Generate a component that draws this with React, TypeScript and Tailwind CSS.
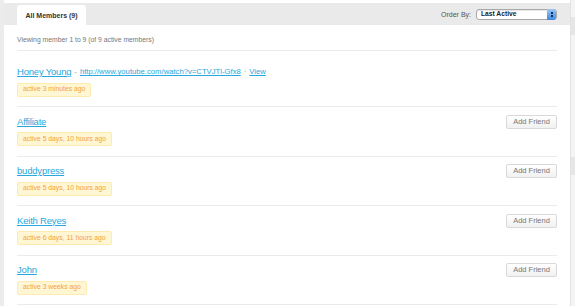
import React from 'react';

type Member = {
  name: string;
  active: string;
  link?: string;
  friend?: boolean;
};

const members: Member[] = [
  { name: 'Honey Young', active: 'active 3 minutes ago', link: 'http://www.youtube.com/watch?v=CTVJTl-Gfx8' },
  { name: 'Affiliate', active: 'active 5 days, 10 hours ago', friend: true },
  { name: 'buddypress', active: 'active 5 days, 10 hours ago', friend: true },
  { name: 'Keith Reyes', active: 'active 6 days, 11 hours ago', friend: true },
  { name: 'John', active: 'active 3 weeks ago', friend: true },
];

function MemberRow({ member, first }: { member: Member; first: boolean }) {
  return (
    <li className={`flex items-start justify-between border-b border-[#ebebeb] leading-none ${first ? 'pt-[14px]' : 'pt-[7.5px]'} pb-[9.5px]`}>
      <div className="flex min-w-0 flex-col items-start gap-[3.5px]">
        <div className="flex h-[14px] items-center gap-[3px] whitespace-nowrap">
          <a href="#" className="text-[9.5px] tracking-[-0.2px] text-[#28a8dc] underline">
            {member.name}
          </a>
          {member.link ? (
            <span className="flex items-center gap-[3px] text-[7.7px] text-[#999]">
              <span>-</span>
              <a href="#" className="text-[#28a8dc] underline">{member.link}</a>
              <span>·</span>
              <a href="#" className="text-[#28a8dc] underline">View</a>
            </span>
          ) : null}
        </div>
        <span className="flex h-[14px] items-center whitespace-nowrap rounded-[2px] border border-[#fdebb0] bg-[#fff6d4] px-[5px] text-[6.8px] text-[#f5a43a]">
          {member.active}
        </span>
      </div>
      {member.friend ? (
        <button className="flex h-[14px] w-[51px] items-center justify-center rounded-[2px] border border-[#d9d9d9] bg-gradient-to-b from-white to-[#f1f1f1] text-[7.5px] leading-none text-[#777]">
          Add Friend
        </button>
      ) : null}
    </li>
  );
}

export default function App() {
  return (
    <div className="flex h-[306px] w-[575px] overflow-hidden bg-white font-['Liberation_Sans',Arial,sans-serif] leading-none">
      <div className="w-[4px] shrink-0 bg-[#ececec]" />

      <main className="w-[566px] shrink-0 pt-[3px]">
        <div className="flex h-[22px] items-end justify-between bg-[#eaeaea] pl-[13px] pr-[13px]">
          <div className="flex h-[20px] w-[69px] items-center justify-center whitespace-nowrap rounded-t-[3px] bg-white text-[7px] font-bold text-[#333]">
            All Members (9)
          </div>
          <div className="mb-[5px] flex items-center gap-[5px]">
            <span className="text-[7px] text-[#555]">Order By:</span>
            <div className="relative flex h-[11px] w-[81px] items-center rounded-[3px] border border-[#a8a8a8] bg-white pl-[4px] shadow-[inset_0_1px_1px_rgba(0,0,0,0.1)]">
              <span className="text-[6.7px] font-bold text-[#222]">Last Active</span>
              <span className="absolute right-0 top-[-1px] flex h-[11px] w-[9px] flex-col items-center justify-center gap-[1px] rounded-r-[3px] bg-gradient-to-b from-[#9cc8f5] to-[#3b86e0]">
                <span className="h-[2px] w-[2px] bg-[#11325a]" />
                <span className="h-[2px] w-[2px] bg-[#11325a]" />
              </span>
            </div>
          </div>
        </div>

        <div className="px-[13px]">
          <div className="flex h-[26px] items-center border-b border-[#ebebeb] pt-[5px] text-[6.8px] text-[#777]">
            Viewing member 1 to 9 (of 9 active members)
          </div>
          <ul>
            {members.map((m, i) => (
              <MemberRow key={m.name} member={m} first={i === 0} />
            ))}
          </ul>
        </div>
      </main>

      <aside className="flex-1 border-l border-[#e2e2e2] bg-[#f4f4f4]">
        <div className="mt-[17px] h-[18px] bg-[#e6e6e6]" />
        <div className="mt-[122px] h-[18px] bg-[#e6e6e6]" />
      </aside>
    </div>
  );
}
